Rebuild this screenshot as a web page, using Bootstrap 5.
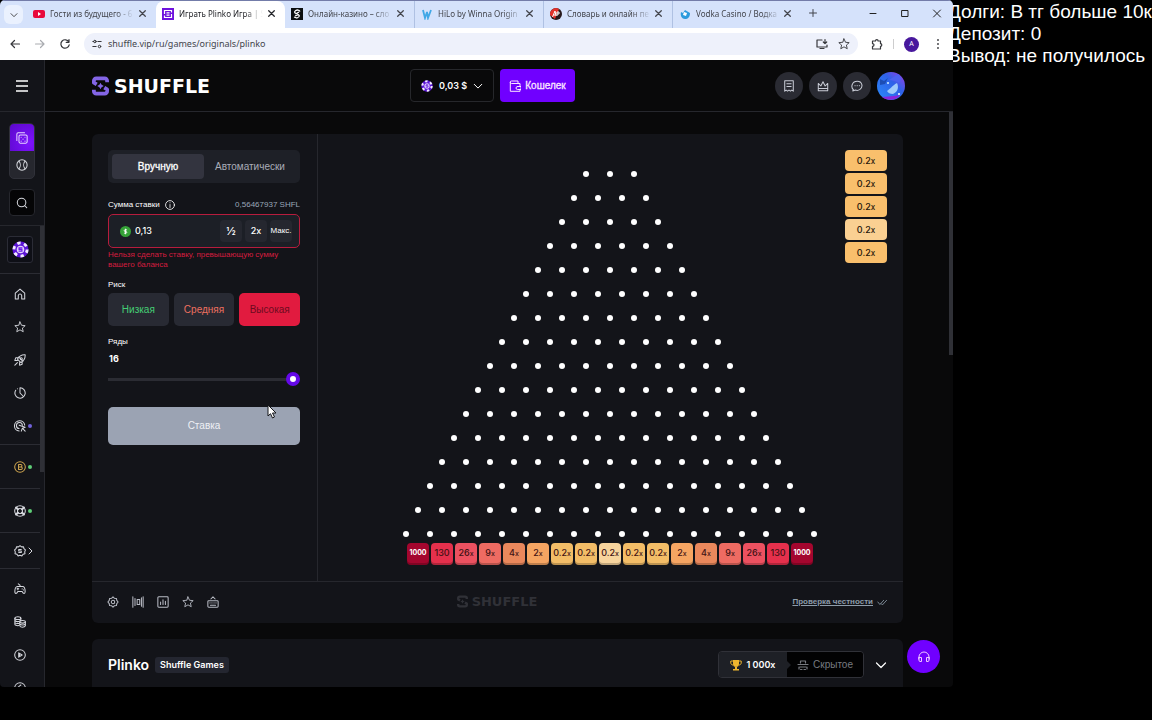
<!DOCTYPE html>
<html lang="ru">
<head>
<meta charset="utf-8">
<meta name="viewport" content="width=device-width, initial-scale=1">
<title>Играть Plinko Игра | Shuffle</title>
<link href="https://cdn.jsdelivr.net/npm/bootstrap@5.3.0/dist/css/bootstrap.min.css" rel="stylesheet">
<style>
:root{--ink:#131419;--line:#26272d;--chip:#2a2b33;--violet:#7000ff}
body{background:#000;color:#fff;font:10px/14px "Liberation Sans",Arial,sans-serif;height:100vh;overflow:hidden}
svg{display:block;flex:none}
.ic{width:12px;height:12px;fill:none;stroke:currentColor;stroke-width:1.2;stroke-linecap:round;stroke-linejoin:round}
button{color:inherit}
.plain{background:none;border:0;padding:0}
.btn{--bs-btn-font-size:10px;--bs-btn-line-height:14px;--bs-btn-padding-x:0;--bs-btn-padding-y:0}
.browser{height:calc(100vh - 33px);background:#09090a;border-radius:5px 5px 4px 4px}
.memo{width:199px;font:19px/22px "Liberation Sans",Arial,sans-serif;white-space:nowrap;padding-top:1px}
.memo p{margin-left:-5px}
/* browser chrome */
.chrome-font{font-family:"Noto Sans","Open Sans",sans-serif;color:#43454c}
.strip{height:28px;background:#d5e2fb;border-top:1px solid #737ca9;padding-left:4px}
.finder{width:19px;height:19px;border-radius:6px;background:#eaf1fe;color:#222;margin-right:4px}
.tab{width:129px;height:27px;padding:0 10px 2px 5px;font-size:8px}
.tab .label{width:84px;white-space:nowrap;margin-left:5px;-webkit-mask-image:linear-gradient(90deg,#000 78%,transparent);mask-image:linear-gradient(90deg,#000 78%,transparent)}
.tab.on{background:#fff;border-radius:8px 8px 0 0;color:#25262b}
.tab.split{border-left:1px solid #afc1e3}
.tab .ic{width:7px;height:7px;stroke-width:1.800}
.fav{width:12px;height:12px;margin-left:1px}
.wctl{gap:22px;padding-right:11px;color:#222}
.wctl .ic{width:10px;height:10px;stroke-width:1}
.tools{height:32px;background:#fff;padding:0 9px;color:#36373b;gap:13px}
.omni{height:22px;border-radius:11px;background:#eef1fb;gap:6px}
.omni input{background:none;border:0;padding:0;font-size:9px;color:#43454c;outline:0}
.who{width:15px;height:15px;font-size:7px;border-radius:50%;background:#48189d;color:#fff}
/* site side rail */
.rail{width:45px;background:var(--ink);border-right:1px solid var(--line)}
.rail>*{flex-shrink:0}
.rail a,.rail button{color:#d5d7dd}
.burger{height:52px;border-bottom:1px solid var(--line)}
.modes{width:26px;height:56px;border:1px solid #303139;border-radius:5px;background:#26272e;overflow:hidden;margin:11px auto 10px}
.modes a{height:27px}
.modes a.on{background:radial-gradient(circle at 80% 70%,#7e12ff,#5a08c8);color:#e7d8ff}
.seek{width:26px;height:27px;border:1px solid var(--line)!important;border-radius:4px;background:#050506}
.railbody{border-top:1px solid var(--line);margin-top:9px}
.railnav{width:40px}
.railnav .sect{border-bottom:1px solid #2b2c33;padding:3px 0 2px}
.railnav .sect>a{height:33px;position:relative}
.railnav .one{padding:5px 0}
.railnav .low{padding:1px 0}
.railnav .coin{padding:10px 0}
.railnav .coin>a{width:26px;height:27px;border:1px solid #2b2c36;border-radius:3px;background:#0e0f16}
.dot{position:absolute;left:28px;top:15px;width:4px;height:4px;border-radius:50%;background:#5fce78}
.dot.v{background:#7263dc}
.more{position:absolute;left:27px;top:13px;width:7px;height:8px}
.bar{width:4px;background:#2f3036}
/* site */
.top{height:52px;border-bottom:1px solid var(--line);padding:0 48px 0 47px}
.top>div{flex:1 1 0}
.brandname{font:bold 19px/20px "DejaVu Sans",sans-serif}
.accounts{gap:6px;padding-right:12px}
.wallet{height:33px;border:1px solid #26272b;border-radius:4px;width:84px;color:#fff;gap:6px}
.wallet span{font:600 9px/14px Inter,sans-serif}
.purse{height:33px;width:75px;background:var(--violet);border-radius:4px;color:#fbe6ff;-webkit-text-stroke:.3px}
.round{width:28px;height:28px;border-radius:50%;background:var(--chip);color:#c9ccd6}
.main{padding:22px 46px 0 47px}
.panel{background:var(--ink);border-radius:6px}
.form{width:226px;padding:16px 17px 0 16px;border-right:1px solid var(--line)}
.switch{height:33px;padding:4px;border-radius:5px;background:#1e2027}
.switch .btn{color:#a9adb8;border:0;border-radius:4px}
.switch .btn.on{background:#33343f;color:#fff;-webkit-text-stroke:.3px}
.cap{font-size:8px;line-height:14px}
.bet{height:34px;border:1px solid #b71c3d;border-radius:5px;background:#1c1f26;padding:0 7px 0 11px;gap:3px}
.bet input{background:none;border:0;padding:0 0 0 1px;color:#fff;width:0;outline:0;font-family:Inter,sans-serif;font-size:9px;font-weight:500}
.bet .btn{height:22px;width:22px;background:#25272f;border:0;color:#fff;font-size:9px;border-radius:4px;white-space:nowrap}
.bet .btn.num{font-family:Inter,sans-serif;font-weight:500}
.bet .btn.half{font-size:11px}
.bet .btn.word{font-size:8px}
.err{color:#d31c3f;font-size:8px;line-height:10px}
.risk{gap:5px}
.risk .btn{flex:1;height:33px;background:#282a33;border:0;border-radius:5px}
.risk .btn.hot{background:#e11b3f;color:#6d0b20}
.rowcount{font:700 9px/14px Inter,sans-serif;padding-left:1px}
.slide{-webkit-appearance:none;appearance:none;width:100%;height:14px;background:linear-gradient(#2b2c33,#2b2c33) center/100% 3px no-repeat;margin:0;display:block}
.slide::-webkit-slider-thumb{-webkit-appearance:none;width:14px;height:14px;border-radius:50%;background:#fff;border:4px solid #6408e8}
.go{height:38px;background:#9ba3b3!important;border:0;border-radius:5px;color:#eef0f5!important;opacity:1!important}
.pointer{position:absolute;left:159px;top:-3px}
.board{display:grid;grid-template-columns:1fr;font-family:Inter,sans-serif}
.board>*{grid-area:1/1}
.pegs{padding:37px 1px 16px 0}
.pegs .line{display:flex;justify-content:center;gap:18px;margin-bottom:18px}
.pegs i{width:6px;height:6px;border-radius:50%;background:#fff}
.bins{gap:2px;margin-top:-12px}
.bins span{width:22px;height:22px;border-radius:4px;font-size:9px;line-height:20px;text-align:center;color:#3f1214;box-shadow:inset 0 -2px rgba(0,0,0,.22);font-weight:500;white-space:nowrap}
.bins small{font-size:7px}
.bins .max{background:#a4062e;color:#fff;font-size:7px;font-weight:700}
.m130{background:#e5304c}.m26{background:#ec5160}.m9{background:#ee6b62}.m4{background:#ea885c}.m2{background:#f6a562}.m02{background:#f3bd67}.mid{background:#f7d49d}
.past{justify-self:end;align-self:start;margin:16px 16px 0 0;gap:2px}
.past span{width:42px;height:21px;border-radius:4px;background:#f9bf6c;color:#24170b;font-size:9px;line-height:21px;text-align:center;font-weight:500}
.past small{font-size:8px}
.past .mid{background:#fad092}
.foot{height:42px;border-top:1px solid var(--line);padding:0 16px 2px 15px;color:#b9bcc5}
.foot>div{flex:1 1 0}
.ghost{color:#303137}
.ghost .brandname{font-size:13px}
.fair{font-size:8px;font-weight:700;color:#8d9caa;white-space:nowrap}
.about{padding:12px 16px;height:80px;font-family:Inter,"Liberation Sans",sans-serif}
.about h1{font-size:14px;line-height:20px;font-weight:600}
.maker{background:#242630;border-radius:3px;font-size:9px;line-height:16px;padding:0 5px;font-weight:600}
.award{height:27px;border:1px solid #303138;border-radius:4px;overflow:hidden;font-size:10px}
.award .a{width:68px;background:#1e2026;font-weight:600;font-size:9px}
.award .b{width:76px;background:#020203;color:#777a80;font-family:"Liberation Sans",sans-serif;position:relative}
.award .b::before{content:"";position:absolute;left:0;top:9px;border:4px solid transparent;border-left-color:#1e2026;border-right:0}
.help{position:absolute;right:13px;bottom:14px;width:33px;height:33px;border-radius:50%;background:var(--violet);color:#f0c8ff}
</style>
</head>
<body class="d-flex align-items-start">
<svg width="0" height="0" class="position-absolute" aria-hidden="true">
<symbol id="x" viewBox="0 0 10 10"><path d="M1 1l8 8M9 1L1 9"/></symbol>
<symbol id="down" viewBox="0 0 12 12"><path d="M1.500 4L6 8.500 10.500 4"/></symbol>
<symbol id="star" viewBox="0 0 16 16"><path d="M8 1.200l2 4.500 4.900.5-3.700 3.200 1.100 4.900L8 11.800l-4.300 2.500 1.100-4.900L1.100 6.200 6 5.700z"/></symbol>
<symbol id="mark-s" viewBox="0 0 18 20"><path fill="none" stroke="currentColor" stroke-width="4" stroke-linejoin="round" d="M16 6V4.500A2.500 2.500 0 0 0 13.500 2h-9A2.500 2.500 0 0 0 2 4.500v2L5 8.300M2 14v1.500A2.500 2.500 0 0 0 4.500 18h9a2.500 2.500 0 0 0 2.500-2.500v-2l-3-1.800"/><path fill="currentColor" stroke="none" d="M9 6.500l1.200 2.300 2.300 1.200-2.300 1.200L9 13.500l-1.200-2.300L5.500 10l2.300-1.200z"/></symbol>
<symbol id="token" viewBox="0 0 18 18"><circle cx="9" cy="9" r="8.500" fill="#5b14d6" stroke="none"/><circle cx="9" cy="9" r="7" fill="none" stroke="#f2eaff" stroke-width="3" stroke-dasharray="3.600 3.730" stroke-linecap="butt"/><circle cx="9" cy="9" r="4" fill="#e2d0ff" stroke="none"/><path d="M11 7.200H7.500v1.600h3v2H7" stroke="#6a1ee6" stroke-width="1.300" fill="none"/></symbol>
</svg>

<div class="browser flex-grow-1 d-flex flex-column overflow-hidden position-relative">
  <header class="chrome-font">
    <div class="strip d-flex align-items-center">
      <button class="plain finder d-flex align-items-center justify-content-center" aria-label="Поиск вкладок"><svg class="ic" style="width:8px"><use href="#down"/></svg></button>
      <div class="tab d-flex align-items-center"><svg class="fav" viewBox="0 0 12 12"><rect y="2" width="12" height="8" rx="2" fill="#e8093c"/><path d="M5 4l3 2-3 2z" fill="#fff"/></svg><span class="label">Гости из будущего - 6</span><button class="plain ms-auto" aria-label="Закрыть"><svg class="ic"><use href="#x"/></svg></button></div>
      <div class="tab on d-flex align-items-center"><svg class="fav" viewBox="0 0 12 12"><rect width="12" height="12" fill="#6f13dd"/><path d="M9.500 4.500V2.500h-7v3.500M2.500 7.500v2h7V6M4.500 4.800h3M4.500 7.200h3" stroke="#fff" fill="none" stroke-width="1.200"/></svg><span class="label">Играть Plinko Игра | S</span><button class="plain ms-auto" aria-label="Закрыть"><svg class="ic"><use href="#x"/></svg></button></div>
      <div class="tab d-flex align-items-center"><svg class="fav" viewBox="0 0 12 12"><rect width="12" height="12" fill="#0c0f10"/><path d="M9 3.500C7-.2 1 4 5 5.500s4.500 3 1 4.500L3 9M4.500 6L8 4M4 8l3.500-1.500" stroke="#fff" fill="none" stroke-width="1.300"/></svg><span class="label">Онлайн-казино – сло</span><button class="plain ms-auto" aria-label="Закрыть"><svg class="ic"><use href="#x"/></svg></button></div>
      <div class="tab split d-flex align-items-center"><svg class="fav" viewBox="0 0 12 12"><path d="M2 2l2 8 2-6 1 6 3-8" stroke="#41a8e6" fill="none" stroke-width="1.800"/></svg><span class="label">HiLo by Winna Origin</span><button class="plain ms-auto" aria-label="Закрыть"><svg class="ic"><use href="#x"/></svg></button></div>
      <div class="tab split d-flex align-items-center"><svg class="fav" viewBox="0 0 12 12"><circle cx="6" cy="6" r="6" fill="#27191c"/><path d="M0 7a6 6 0 0 1 9-6L5 11z" fill="#e2322b"/><path d="M2.500 9L5 3l1 5M3.500 7h2M7 8V4h2v2H7" stroke="#fff" fill="none"/></svg><span class="label">Словарь и онлайн пе</span><button class="plain ms-auto" aria-label="Закрыть"><svg class="ic"><use href="#x"/></svg></button></div>
      <div class="tab split d-flex align-items-center"><svg class="fav" viewBox="0 0 12 12"><path d="M2 4l2 1 2-3 5 3c0 4-2 6-5 6S1 8 2 4z" fill="#2c9bdd"/><path d="M5 4l3 1-1 3-3-1z" fill="#fff"/></svg><span class="label">Vodka Casino / Водка</span><button class="plain ms-auto" aria-label="Закрыть"><svg class="ic"><use href="#x"/></svg></button></div>
      <button class="plain ps-2 pb-1" aria-label="Новая вкладка"><svg class="ic" style="width:8px;stroke-width:1" viewBox="0 0 8 8"><path d="M4 .5v7M.5 4h7"/></svg></button>
      <div class="wctl ms-auto d-flex pb-1">
        <button class="plain" aria-label="Свернуть"><svg class="ic" viewBox="0 0 10 10"><path d="M2 5.500h6"/></svg></button>
        <button class="plain" aria-label="Развернуть"><svg class="ic" viewBox="0 0 10 10"><path d="M2 2.500h6v6H2z"/></svg></button>
        <button class="plain" aria-label="Закрыть окно"><svg class="ic" viewBox="0 0 10 10"><path d="M1.500 2l7 7M8.500 2l-7 7"/></svg></button>
      </div>
    </div>
    <div class="tools d-flex align-items-center">
      <button class="plain" aria-label="Назад"><svg class="ic" viewBox="0 0 12 12"><path d="M10.500 6H2M5.500 2.500L2 6l3.500 3.500"/></svg></button>
      <button class="plain" aria-label="Вперёд"><svg class="ic" style="color:#a9abb0" viewBox="0 0 12 12"><path d="M1.500 6H10M6.500 2.500L10 6 6.500 9.500"/></svg></button>
      <button class="plain" aria-label="Обновить"><svg class="ic" viewBox="0 0 12 12"><path d="M9.800 4A4.200 4.200 0 1 0 10.200 6.800M10 1.500V4.300H7.200"/></svg></button>
      <label class="omni flex-grow-1 d-flex align-items-center ps-2 pe-2"><svg class="ic" style="width:10px" viewBox="0 0 12 12"><path d="M1 3h1M7 3h4M1 9h4"/><circle cx="3.500" cy="3" r="1.500"/><circle cx="9" cy="9" r="1.500"/></svg>
        <input class="flex-grow-1" value="shuffle.vip/ru/games/originals/plinko" aria-label="Адрес">
        <svg class="ic" viewBox="0 0 12 12"><path d="M6 2H1v7h10V7M4 10.500h4M9 1.500v4M7.300 4L9 5.700 10.700 4"/></svg><svg class="ic ms-1"><use href="#star"/></svg></label>
      <button class="plain" aria-label="Расширения"><svg class="ic" viewBox="0 0 12 12"><path d="M1.500 3H4.500a1.300 1.300 0 0 1 2.600 0H9.500v2.700a1.300 1.300 0 0 1 0 2.600V11h-8V8.300c2 0 2-2.600 0-2.600z"/></svg></button>
      <span class="vr" style="height:10px;margin:auto -3px"></span>
      <button class="plain who d-flex align-items-center justify-content-center">A</button>
      <button class="plain" aria-label="Меню"><svg class="ic" viewBox="0 0 12 12" style="stroke-width:1.800"><path d="M6 2v.1M6 6v.1M6 10v.1"/></svg></button>
    </div>
  </header>

  <div class="d-flex flex-grow-1" style="min-height:0">
    <nav class="rail d-flex flex-column overflow-hidden flex-shrink-0">
      <button class="plain burger d-flex align-items-center justify-content-center" aria-label="Меню сайта"><svg width="12" height="12" viewBox="0 0 12 12" fill="none" stroke="#fff" stroke-width="1.300"><path d="M0 1h12M0 6h12M0 11h12"/></svg></button>
      <div class="modes">
        <a href="#casino" class="on d-flex align-items-center justify-content-center" aria-label="Казино"><svg class="ic" viewBox="0 0 14 14"><rect x="3.500" y="3.500" width="9.500" height="9.500" rx="1.500"/><path d="M1 10V2.500A1.500 1.500 0 0 1 2.500 1H10M6 6v.2M10.500 6v.2M8.200 8.200v.2M6 10.500v.2M10.500 10.500v.2"/></svg></a>
        <a href="#sport" class="d-flex align-items-center justify-content-center" aria-label="Спорт"><svg class="ic" viewBox="0 0 14 14"><circle cx="7" cy="7" r="6"/><path d="M3.500 2.500c2 2.500 2 6.500 0 9M10.500 2.500c-2 2.500-2 6.500 0 9"/></svg></a>
      </div>
      <button class="plain seek d-flex align-items-center justify-content-center mx-auto" aria-label="Поиск"><svg class="ic" viewBox="0 0 14 14"><circle cx="6.500" cy="6.500" r="5"/><path d="M10.200 10.200L12.500 12.500"/></svg></button>
      <div class="railbody d-flex">
        <div class="railnav">
          <div class="sect coin d-flex justify-content-center"><a href="#shfl" class="d-flex align-items-center justify-content-center" aria-label="SHFL"><svg width="17" height="17"><use href="#token"/></svg></a></div>
          <div class="sect">
            <a href="#home" class="d-flex align-items-center justify-content-center" aria-label="Главная"><svg class="ic" viewBox="0 0 14 14"><path d="M1.500 6L7 1.200 12.500 6v6.800H9V9a2 2 0 0 0-4 0v3.800H1.500z"/></svg></a>
            <a href="#fav" class="d-flex align-items-center justify-content-center" aria-label="Избранное"><svg class="ic"><use href="#star"/></svg></a>
            <a href="#new" class="d-flex align-items-center justify-content-center" aria-label="Новинки"><svg class="ic" viewBox="0 0 14 14"><path d="M13 1c-4-.3-7 1.500-9 5l4 4c3.500-2 5.300-5 5-9zM5 4.500H2L1 7.500h3M9.500 9V12l-3 1V10M1 13l3-3M5.500 3.500l5 5"/><circle cx="8.500" cy="5.500" r="1.200"/></svg></a>
            <a href="#recent" class="d-flex align-items-center justify-content-center" aria-label="Недавние"><svg class="ic" viewBox="0 0 14 14"><path d="M7 1v6l3.500 3.500M7 1a6 6 0 1 1-5 2.800M1.200 6v.1M4 2v.1"/></svg></a>
            <a href="#challenge" class="d-flex align-items-center justify-content-center" aria-label="Испытания"><svg class="ic" viewBox="0 0 14 14"><path d="M12.500 6A6 6 0 1 0 6 12.800M9.800 6A3.500 3.500 0 1 0 6 10M6 6l7 2.500-3 1.200L13 13M9.700 9.800L8.500 13z"/></svg><span class="dot v"></span></a>
          </div>
          <div class="sect one"><a href="#btc" class="d-flex align-items-center justify-content-center" aria-label="Bitcoin"><svg class="ic" style="color:#cfa650" viewBox="0 0 14 14"><circle cx="7" cy="7" r="6.200"/><path d="M5.300 4h2.500c2 0 2 3 0 3H5.300zM5.300 7h2.900c2 0 2 3 0 3H5.300z"/></svg><span class="dot"></span></a></div>
          <div class="sect one"><a href="#live" class="d-flex align-items-center justify-content-center" aria-label="Рулетка"><svg class="ic" viewBox="0 0 14 14"><circle cx="7" cy="7" r="6.200"/><circle cx="7" cy="7" r="3"/><path stroke-width="2.500" d="M2.500 3l2 2M11.500 3l-2 2M2.500 11l2-2M11.500 11l-2-2"/></svg><span class="dot"></span></a></div>
          <div class="sect low"><a href="#promo" class="d-flex align-items-center justify-content-center" aria-label="Акции"><svg class="ic" viewBox="0 0 14 14"><path d="M7 .8l1.800 1.400 2.300-.1.500 2.200 1.700 1.500L12.500 8l.3 2.200-2.200.6-1.400 1.900L7 12l-2.200.7-1.400-1.900-2.200-.6L1.500 8 .7 5.800l1.700-1.500.5-2.200 2.300.1zM8.500 5.200h-3V7h3v1.800h-3"/></svg><svg class="ic more" viewBox="0 0 7 8"><path d="M2 1l3 3-3 3" stroke-width="1"/></svg></a></div>
          <div class="sect">
            <a href="#games" class="d-flex align-items-center justify-content-center" aria-label="Игры"><svg class="ic" viewBox="0 0 14 14"><path d="M4 4h6c2 0 3 3 3 6s-2 3-3.500 0h-5C3 13 1 13 1 10s1-6 3-6zM7 4V2.500L5 1M4.500 5.800v2M3.500 6.800h2M9.500 6.800v.1M11 8v.1"/></svg></a>
            <a href="#slots" class="d-flex align-items-center justify-content-center" aria-label="Слоты"><svg class="ic" viewBox="0 0 14 14"><ellipse cx="4.500" cy="2.500" rx="3.500" ry="1.700"/><path d="M1 2.500v7c0 1 2 2 4.500 1.700M8 2.500v3M1 5c1 2 5 2 6 .5M1 7.500c1 1.500 3 1.500 5 1.200"/><ellipse cx="10" cy="6.800" rx="3.300" ry="1.500"/><path d="M6.700 7v4.500c1 2 5.500 2 6.600 0V7M6.700 9c1 2 5.500 2 6.600 0"/></svg></a>
            <a href="#shows" class="d-flex align-items-center justify-content-center" aria-label="Шоу"><svg class="ic" viewBox="0 0 14 14"><circle cx="7" cy="7" r="6.200"/><path d="M5.500 4.500v5l4-2.500zM6.500 6.500v1"/></svg></a>
            <a href="#table" class="d-flex align-items-center justify-content-center" aria-label="Столы"><svg class="ic" viewBox="0 0 14 14"><circle cx="7" cy="7" r="6.200"/><path d="M8 3.500C6 5 4 6 4 8h5"/></svg></a>
          </div>
        </div>
        <div class="bar" style="height:246px"></div>
      </div>
    </nav>

    <div class="flex-grow-1 d-flex flex-column overflow-hidden">
      <div class="top d-flex align-items-center flex-shrink-0">
        <div><a href="#" class="d-flex align-items-center text-white text-decoration-none" style="gap:5px"><svg width="17" height="20" style="color:#8365e5"><use href="#mark-s"/></svg><span class="brandname">SHUFFLE</span></a></div>
        <div class="accounts d-flex justify-content-center">
          <button class="btn wallet d-flex align-items-center justify-content-center"><svg width="12" height="12"><use href="#token"/></svg><span>0,03 $</span><svg class="ic" style="width:10px"><use href="#down"/></svg></button>
          <button class="btn purse d-flex align-items-center justify-content-center gap-1"><svg class="ic" style="stroke-width:1" viewBox="0 0 12 12"><path d="M9 3.500V1H2.500a1.200 1.200 0 0 0 0 2.500H11v3M1.300 2.300v9H11V9.500M8.500 6.500H12v3H8.500a1.500 1.500 0 0 1 0-3z"/></svg><span>Кошелек</span></button>
        </div>
        <div class="d-flex justify-content-end" style="gap:6px">
          <button class="btn round d-flex align-items-center justify-content-center border-0" aria-label="Ставки"><svg class="ic" viewBox="0 0 14 14"><path d="M2 1h10v12l-1.700-1.200L8.700 13 7 11.800 5.300 13l-1.600-1.200L2 13zM4.500 4.500h5M4.500 7.500h5"/></svg></button>
          <button class="btn round d-flex align-items-center justify-content-center border-0" aria-label="VIP"><svg class="ic" viewBox="0 0 14 14"><path d="M1.500 12.500V4l3 3L7 2l2.500 5 3-3v8.500zM1.500 10h11"/></svg></button>
          <button class="btn round d-flex align-items-center justify-content-center border-0" aria-label="Чат"><svg class="ic" viewBox="0 0 14 14"><path d="M3 11.500C-1 8 1.500 1.500 7.300 1.500S14.500 8 10.500 11c-1.500 1-4 1.300-5.200.7L2 12.700zM4.700 6.500v.1M7.200 6.500v.1M9.700 6.500v.1"/></svg></button>
          <button class="plain" aria-label="Профиль"><svg width="28" height="28" viewBox="0 0 28 28"><defs><linearGradient id="av" x1="1" y1="0" x2="0" y2="1"><stop offset="0" stop-color="#a33ae8"/><stop offset=".4" stop-color="#2f62e8"/><stop offset="1" stop-color="#2a8bfa"/></linearGradient></defs><circle cx="14" cy="14" r="14" fill="url(#av)"/><path d="M5 25c5 4 14 4 18-2l-6 1z" fill="#8c25dc"/><path d="M10 19c3-2 5-5 10-8 2 4 1 9-4 11-3 0-5-1-6-3z" fill="#9fcbfb"/><path d="M12 8l9-6c3 2 4 6 1 9-4-3-7-2-10-3z" fill="#4d62f1"/><path d="M3 7l4 2 4-3-3 6-5 1z" fill="#1c4db5"/><circle cx="11" cy="11" r="1" fill="#d8f7ff"/><circle cx="22" cy="22" r="1" fill="#fff"/></svg></button>
        </div>
      </div>
      <div class="d-flex flex-grow-1" style="min-height:0">
        <main class="main flex-grow-1 d-flex flex-column gap-3 overflow-hidden">
          <section class="panel flex-shrink-0">
            <div class="d-flex">
              <form class="form flex-shrink-0" onsubmit="return false">
                <div class="switch d-flex"><button type="button" class="btn on flex-fill w-50">Вручную</button><button type="button" class="btn flex-fill w-50 px-1">Автоматически</button></div>
                <div class="cap d-flex align-items-center" style="margin-top:15px"><label for="amount">Сумма ставки</label><svg class="ic" style="width:10px;stroke-width:1;margin-left:5px" viewBox="0 0 12 12"><circle cx="6" cy="6" r="5.300"/><path d="M6 5.500V9M6 3.300v.1"/></svg><span class="ms-auto" style="color:#9aa7b8">0,56467937 SHFL</span></div>
                <div class="bet d-flex align-items-center" style="margin-top:2px"><svg width="11" height="11" viewBox="0 0 12 12"><circle cx="6" cy="6" r="6" fill="#36a338"/><path d="M7.700 4.200H5.500a.9.900 0 0 0 0 1.800h1a.9.900 0 0 1 0 1.800H4.300M6 3v6" fill="none" stroke="#fff"/></svg><input id="amount" class="flex-grow-1" value="0,13"><button type="button" class="btn num half">½</button><button type="button" class="btn num">2x</button><button type="button" class="btn word">Макс.</button></div>
                <div class="err" style="margin-top:2px">Нельзя сделать ставку, превышающую сумму вашего баланса</div>
                <div class="cap" style="margin-top:8px">Риск</div>
                <div class="risk d-flex" style="margin-top:1px"><button type="button" class="btn" style="color:#45cf75">Низкая</button><button type="button" class="btn" style="color:#ee7060">Средняя</button><button type="button" class="btn hot">Высокая</button></div>
                <label class="cap d-block" for="rows" style="margin-top:9px">Ряды</label>
                <output class="rowcount d-block" for="rows" style="margin-top:3px">16</output>
                <input id="rows" class="slide" type="range" min="8" max="16" value="16" style="margin-top:6px">
                <div class="position-relative" style="margin-top:21px"><button class="btn go w-100" disabled>Ставка</button><svg class="pointer" width="11" height="15" viewBox="0 0 11 15"><path d="M1 1v11l2.500-2.300L5.500 14l2-1-2-4H9z" fill="#fff" stroke="#15161a"/></svg></div>
              </form>
              <div class="board flex-grow-1">
                <div class="pegs"><div id="pegs"></div>
                  <div class="bins d-flex justify-content-center"><span class="max">1000</span><span class="m130">130</span><span class="m26">26<small>x</small></span><span class="m9">9<small>x</small></span><span class="m4">4<small>x</small></span><span class="m2">2<small>x</small></span><span class="m02">0.2<small>x</small></span><span class="m02">0.2<small>x</small></span><span class="mid">0.2<small>x</small></span><span class="m02">0.2<small>x</small></span><span class="m02">0.2<small>x</small></span><span class="m2">2<small>x</small></span><span class="m4">4<small>x</small></span><span class="m9">9<small>x</small></span><span class="m26">26<small>x</small></span><span class="m130">130</span><span class="max">1000</span></div>
                </div>
                <div class="past d-flex flex-column"><span>0.2<small>x</small></span><span>0.2<small>x</small></span><span>0.2<small>x</small></span><span class="mid">0.2<small>x</small></span><span>0.2<small>x</small></span></div>
              </div>
            </div>
            <div class="foot d-flex align-items-center">
              <div class="d-flex" style="gap:13px">
                <button class="plain" aria-label="Настройки"><svg class="ic" viewBox="0 0 14 14"><path d="M7 1l1.500 1.500L11 2.800l.4 2.300L13 7l-1.600 1.900-.4 2.300-2.500.3L7 13l-1.500-1.500-2.500-.3-.4-2.300L1 7l1.600-1.900L3 2.800l2.500-.3z"/><circle cx="7" cy="7" r="2"/></svg></button>
                <button class="plain" aria-label="Театральный режим"><svg class="ic" viewBox="0 0 14 14"><path d="M1 1v12M3.500 3v8M13 1v12M11 2v10M6 4h3v6H6z"/></svg></button>
                <button class="plain" aria-label="Статистика"><svg class="ic" viewBox="0 0 14 14"><rect x="1" y="1" width="12" height="12" rx="1"/><path d="M4.200 7v3M7 4.500V10M9.800 6v4"/></svg></button>
                <button class="plain" aria-label="В избранное"><svg class="ic"><use href="#star"/></svg></button>
                <button class="plain" aria-label="Горячие клавиши"><svg class="ic" viewBox="0 0 14 14"><rect x="1" y="5.500" width="12" height="7.500" rx="1"/><path d="M4.500 3.500L7 1l2.500 2.500M3.500 8v.1M5.800 8v.1M8.200 8v.1M10.500 8v.1M4 10.700h6"/></svg></button>
              </div>
              <div class="ghost d-flex justify-content-center align-items-center gap-1"><svg width="11" height="13"><use href="#mark-s"/></svg><span class="brandname">SHUFFLE</span></div>
              <div class="d-flex justify-content-end align-items-center gap-1"><a href="#fair" class="fair">Проверка честности</a><svg class="ic" style="width:10px;stroke-width:1;color:#8d9caa" viewBox="0 0 12 10"><path d="M1 5l2.500 3L8 3M5 7l1.500 1.500L11.500 3"/></svg></div>
            </div>
          </section>
          <section class="panel about d-flex align-items-start flex-shrink-0">
            <div class="d-flex align-items-center" style="height:27px;gap:6px"><h1 class="m-0">Plinko</h1><span class="maker">Shuffle Games</span></div>
            <div class="award d-flex ms-auto">
              <div class="a d-flex align-items-center justify-content-center gap-1"><svg width="12" height="12" viewBox="0 0 12 12"><path d="M3 1h6v4a3 3 0 0 1-6 0zM5 7h2v3H5zM3 10h6v1.500H3z" fill="#eeb52e"/><path d="M3 2H.8v2c0 1 1 2 2.200 2M9 2h2.200v2c0 1-1 2-2.200 2" stroke="#eeb52e" fill="none"/></svg>1 000x</div>
              <div class="b d-flex align-items-center justify-content-center gap-1"><svg class="ic" viewBox="0 0 12 12"><path d="M3.500 4V2h5v2M1 5.500h10M3 8h6M3.500 10.500h1.500M7 10.500h1.500M2 8v2M10 8v2"/></svg>Скрытое</div>
            </div>
            <button class="plain align-self-start" style="margin:8px 0 0 11px" aria-label="Подробнее"><svg class="ic"><use href="#down"/></svg></button>
          </section>
        </main>
        <div class="bar flex-shrink-0" style="height:243px"></div>
      </div>
    </div>
  </div>
  <button class="plain help d-flex align-items-center justify-content-center" aria-label="Поддержка"><svg class="ic" style="stroke-width:1" viewBox="0 0 12 12"><path d="M1 8V6a5 5 0 0 1 10 0v2M1 6.500h2.500v4H2A1 1 0 0 1 1 9.500zM11 6.500H8.500v4H10a1 1 0 0 0 1-1z"/></svg></button>
</div>

<aside class="memo overflow-hidden flex-shrink-0"><p class="mb-0">Долги: В тг больше 10к<br>Депозит: 0<br>Вывод: не получилось</p></aside>

<script src="https://cdn.jsdelivr.net/npm/bootstrap@5.3.0/dist/js/bootstrap.bundle.min.js"></script>
<script>
// sixteen rows of pegs, the first with three
document.getElementById('pegs').innerHTML = Array.from({length: 16}, (_, r) =>
  '<div class="line">' + '<i></i>'.repeat(r + 3) + '</div>').join('');
</script>
</body>
</html>
